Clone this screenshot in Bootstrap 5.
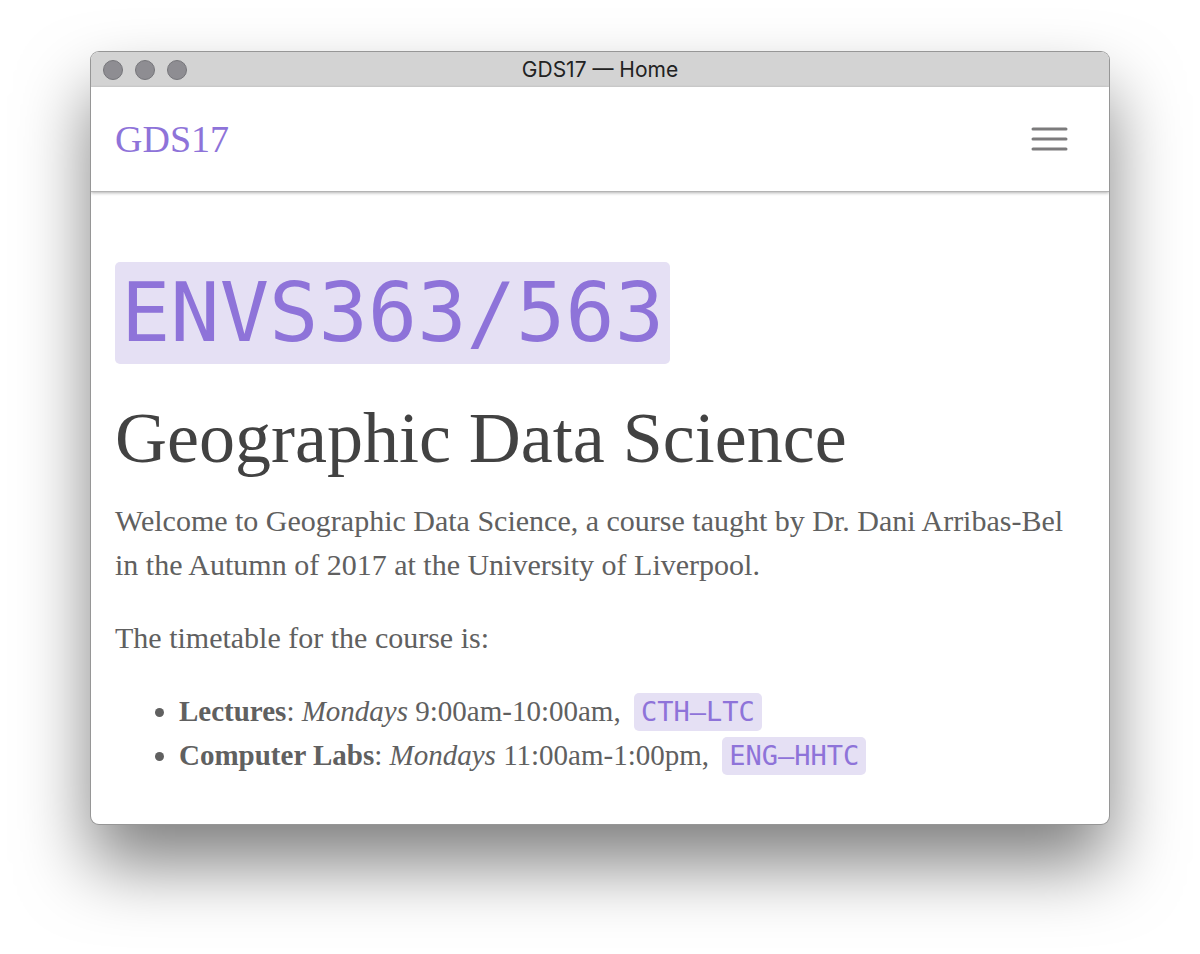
<!DOCTYPE html>
<html lang="en">
  <head>
    <meta charset="UTF-8" />
    <meta name="viewport" content="width=device-width, initial-scale=1.0" />
    <title>GDS17 — Home</title>
    <link
      href="https://cdn.jsdelivr.net/npm/bootstrap@5.3.0/dist/css/bootstrap.min.css"
      rel="stylesheet"
    />
    <style>
      body {
        font-family: "Liberation Serif", serif;
        font-size: 30px;
        line-height: 44px;
        color: #606060;
        background: #fff;
      }
      .desktop {
        padding: 52px 91px 128px;
      }
      .app-window {
        border-radius: 8px;
        box-shadow: 0 0 0 1px #969696, 0 40px 70px rgba(0, 0, 0, 0.5);
      }
      .titlebar {
        height: 35px;
        background: #d3d3d3;
        color: #222;
        font-family: Inter, sans-serif;
        font-size: 21px;
      }
      .traffic {
        left: 12px;
        gap: 12px;
      }
      .dot {
        width: 20px;
        height: 20px;
        border: 1px solid #75757a;
        border-radius: 50%;
        background: #8e8d92;
      }
      .site-nav {
        height: 105px;
        padding: 0 24px;
        border-bottom: 1px solid #b4b4b4;
        box-shadow: 0 1px 3px rgba(0, 0, 0, 0.3);
      }
      .site-nav .navbar-brand {
        font-size: 38px;
        color: #8e73d9;
      }
      .site-nav .navbar-toggler {
        padding: 0 17px;
      }
      .page {
        padding: 70px 24px 47px;
      }
      .page p {
        margin-bottom: 29px;
      }
      code {
        display: inline-block;
        padding: 0 7px;
        border-radius: 5px;
        background: #e5e0f4;
        color: #8e73d9;
        font-family: "DejaVu Sans Mono", monospace;
        font-size: 27px;
        line-height: 38px;
      }
      .course-code {
        padding: 0 6px;
        font-size: 82px;
        line-height: 102px;
      }
      .course-name {
        margin: 34px 0 21px;
        font-size: 72px;
        line-height: 80px;
        color: #424242;
      }
      .timetable {
        padding-left: 64px;
        font-size: 29px;
      }
      .timetable code {
        margin-left: 6px;
      }
    </style>
  </head>
  <body>
    <div class="desktop">
      <div class="app-window bg-white overflow-hidden">
        <!-- Title bar -->
        <header class="titlebar position-relative d-flex align-items-center justify-content-center">
          <div class="traffic position-absolute d-flex">
            <span class="dot"></span>
            <span class="dot"></span>
            <span class="dot"></span>
          </div>
          <span>GDS17 — Home</span>
        </header>

        <nav class="site-nav navbar">
          <a class="navbar-brand p-0 m-0" href="#">GDS17</a>
          <button class="navbar-toggler border-0" type="button" aria-label="Menu">
            <svg class="d-block" width="38" height="26" viewBox="0 0 38 26" fill="none" stroke="#7c7b7c" stroke-width="3" stroke-linecap="round">
              <path d="M3 3h33M3 13h33M3 23h33" />
            </svg>
          </button>
        </nav>

        <main class="page">
          <h1 class="d-flex m-0"><code class="course-code">ENVS363/563</code></h1>
          <h2 class="course-name fw-normal">Geographic Data Science</h2>
          <p>
            Welcome to Geographic Data Science, a course taught by Dr. Dani Arribas-Bel
            in the Autumn of 2017 at the University of Liverpool.
          </p>
          <p>The timetable for the course is:</p>
          <ul class="timetable mb-0">
            <li><strong>Lectures</strong>: <em>Mondays</em> 9:00am-10:00am, <code>CTH–LTC</code></li>
            <li><strong>Computer Labs</strong>: <em>Mondays</em> 11:00am-1:00pm, <code>ENG–HHTC</code></li>
          </ul>
        </main>
      </div>
    </div>

    <script src="https://cdn.jsdelivr.net/npm/bootstrap@5.3.0/dist/js/bootstrap.bundle.min.js"></script>
  </body>
</html>
